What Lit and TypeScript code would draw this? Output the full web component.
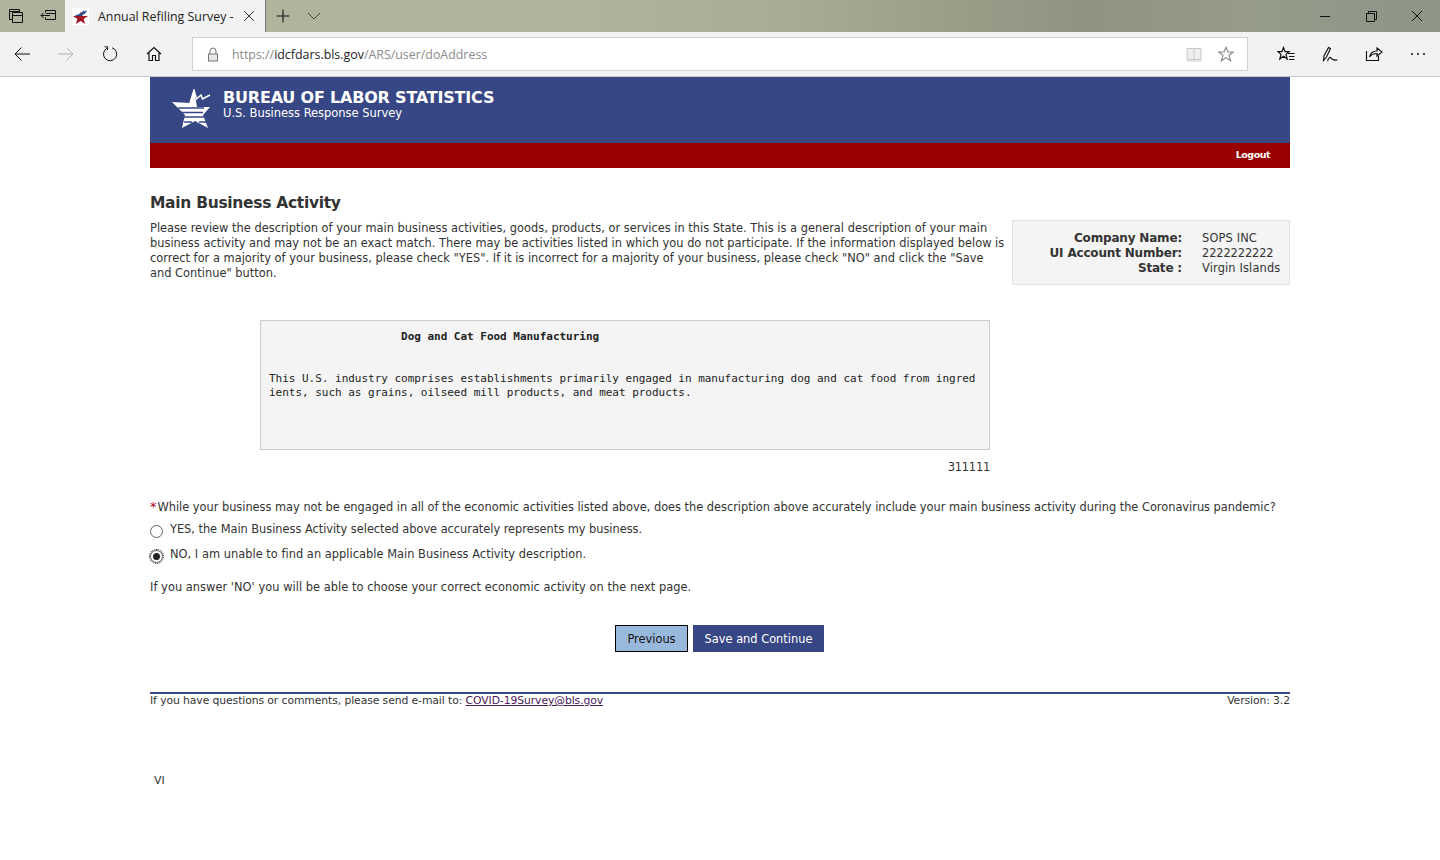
import { LitElement, html, css, svg } from "lit";
import { customElement } from "lit/decorators.js";

const ic = (w: number, h: number, body: unknown, cls = "") => html`<svg class=${cls} width=${w} height=${h} viewBox="0 0 ${w} ${h}" fill="none" stroke="currentColor" stroke-width="1">${body}</svg>`;

@customElement("app-root")
export class AppRoot extends LitElement {
  static styles = css`
    :host { display: block; width: 1440px; height: 860px; overflow: hidden; background: #fff; font-family: "DejaVu Sans", sans-serif; color: #333; font-size: 11.4px; }
    svg { display: block; flex: none; }
    .titlebar { height: 32px; display: flex; background: linear-gradient(90deg, #b0b49c 0%, #b0b49c 40%, #a8ac94 55%, #8f9380 75%, #969b8a 87%, #8f9585 100%); color: #111; }
    .tb-btn { width: 32px; display: flex; align-items: center; justify-content: center; }
    .tab { width: 201px; margin-left: 1px; background: #f2f2f2; display: flex; align-items: center; padding-left: 7px; box-sizing: border-box; border-right: 1px solid #777; font: 12.4px "Open Sans", sans-serif; color: #222; }
    .tab .name { margin-left: 9px; flex: 1; white-space: nowrap; }
    .tab .close { margin-right: 10px; color: #333; }
    .new { width: 34px; display: flex; justify-content: center; align-items: center; }
    .new.chev { width: 28px; color: #444; }
    .spacer { flex: 1; }
    .win { width: 46px; display: flex; align-items: center; justify-content: center; }
    .toolbar { height: 44px; background: #f2f2f2; border-bottom: 1px solid #c8c8c8; display: flex; align-items: center; color: #111; }
    .nav { width: 44px; display: flex; justify-content: center; align-items: center; }
    .nav.off { color: #b4b4b4; }
    .addr { margin-left: 16px; width: 1057px; height: 34px; box-sizing: border-box; background: #fff; border: 1px solid #d0d0d0; display: flex; align-items: center; padding-left: 14px; font: 12.4px "Open Sans", sans-serif; color: #8a8a8a; }
    .addr b { font-weight: 400; color: #222; }
    .addr .url { margin-left: 13px; flex: 1; white-space: nowrap; }
    .addr .book { margin-right: 16px; color: #c4c4c4; }
    .addr .star { margin-right: 13px; }
    .tools { margin-left: 16px; display: flex; }
    .tools div { width: 44px; display: flex; justify-content: center; align-items: center; }
    .wrap { width: 1140px; margin-left: 150px; }
    .banner { height: 66px; background: #374785; color: #fff; display: flex; padding-left: 22px; box-sizing: border-box; }
    .logo { margin-top: 12px; }
    .brand { margin-left: 11px; padding-top: 11px; }
    .brand h1 { margin: 0; font: 700 16px/20px "DejaVu Sans", sans-serif; letter-spacing: -0.2px; white-space: nowrap; }
    .brand p { margin: -2px 0 0; font: 11.5px/15px "DejaVu Sans", sans-serif; letter-spacing: -0.03px; }
    .redbar { height: 23px; padding: 0 20px 2px 0; background: #990000; display: flex; justify-content: flex-end; align-items: center; color: #fff; font-size: 9.5px; font-weight: 700; letter-spacing: -0.5px; }
    h2 { margin: 25px 0 0; font: 700 15.5px/20px "DejaVu Sans", sans-serif; letter-spacing: -0.3px; color: #333; }
    .intro { display: flex; margin-top: 8px; }
    .intro p { margin: 0; width: 862px; flex: none; line-height: 15px; letter-spacing: 0.013px; white-space: nowrap; }
    .company { margin: -1px 0 0 auto; width: 278px; height: 65px; box-sizing: border-box; background: #f4f4f4; border: 1px solid #e2e2e2; display: grid; grid-template-columns: 169px 1fr; column-gap: 20px; align-content: start; padding-top: 10px; line-height: 15px; letter-spacing: 0.15px; }
    .company .k { text-align: right; font-weight: 700; font-size: 12px; letter-spacing: -0.18px; }
    .company .num { letter-spacing: -0.1px; }
    .desc { margin: 35px 0 0 110px; width: 730px; height: 130px; box-sizing: border-box; background: #f4f4f4; border: 1px solid #ccc; padding: 9px 8px; font: 11px/14px "DejaVu Sans Mono", monospace; letter-spacing: -0.02px; color: #222; white-space: pre; }
    .code { width: 840px; text-align: right; margin-top: 10px; line-height: 15px; letter-spacing: -0.2px; }
    .q { margin-top: 24px; line-height: 15px; letter-spacing: -0.02px; white-space: nowrap; }
    .q i { color: #b00020; font-style: normal; font-size: 13px; margin-right: 1px; }
    .opt { display: flex; align-items: flex-start; line-height: 15px; white-space: nowrap; }
    .opt.a { margin-top: 7px; letter-spacing: -0.03px; }
    .opt.b { margin-top: 9px; letter-spacing: 0.03px; }
    .radio { width: 13px; height: 13px; box-sizing: border-box; border-radius: 50%; border: 1px solid #666; background: #fff; margin: 3px 7px 0 0; position: relative; flex: none; }
    .radio.on { outline: 1px dotted #222; outline-offset: 0; }
    .radio.on::after { content: ""; position: absolute; left: 2px; top: 2px; width: 7px; height: 7px; border-radius: 50%; background: #222; }
    .note { margin-top: 17px; line-height: 15px; letter-spacing: 0.04px; }
    .btns { margin-top: 30px; display: flex; justify-content: center; gap: 5px; padding-right: 1px; }
    button { font: 11.4px "DejaVu Sans", sans-serif; height: 27px; padding: 0; box-sizing: border-box; }
    .prev { width: 73px; background: #99b9dc; border: 1px solid #000; color: #111; }
    .save { width: 131px; background: #374785; border: 0; color: #fff; }
    .foot { margin-top: 40px; border-top: 2px solid #374785; display: flex; justify-content: space-between; line-height: 14px; font-size: 10.8px; letter-spacing: -0.09px; }
    .foot a { color: #4a1a5c; text-decoration: underline; }
    .vi { margin: 66px 0 0 4px; font-size: 11px; line-height: 14px; }
  `;

  render() {
    return html`
      <div class="titlebar">
        <div class="tb-btn">${ic(15, 15, svg`<path d="M3.5 10.5H.5V.5H10.5V3.5M.5 2.5H10.5"/><path d="M3.5 3.5H13.5V13.5H3.5ZM3.5 6.5H13.5"/>`)}</div>
        <div class="tb-btn">${ic(17, 12, svg`<path d="M5.5 2.5V.5H15.5V9.5H5.5V7.5M6 3.5H15.5M1 5.5H10M1 5.5L3.5 3M1 5.5L3.5 8"/>`)}</div>
        <div class="tab">
          <svg width="17" height="17" viewBox="0 0 17 17"><rect width="17" height="17" fill="#fff"/><path d="M8.5 4L10.5 8H16L11.6 11L13.2 16L8.5 13L3.8 16L5.4 11L1 8H6.5Z" fill="#a01622"/><path d="M3 7C6.5 7 10 5 12.5 1L11.5 3.6L15.5 2.4L13 5.6L9 8H4Z" fill="#2b4d8f"/></svg>
          <span class="name">Annual Refiling Survey -</span>
          ${ic(12, 12, svg`<path d="M1 1L11 11M11 1L1 11"/>`, "close")}
        </div>
        <div class="new">${ic(14, 14, svg`<path d="M7 .5V13.5M.5 7H13.5" stroke-width="1.1"/>`)}</div>
        <div class="new chev">${ic(14, 8, svg`<path d="M1 1L7 7L13 1"/>`)}</div>
        <div class="spacer"></div>
        <div class="win">${ic(10, 10, svg`<path d="M0 5.5H10"/>`)}</div>
        <div class="win">${ic(11, 11, svg`<path d="M.5 2.5H8.5V10.5H.5ZM2.5 2.5V.5H10.5V8.5H8.5"/>`)}</div>
        <div class="win">${ic(12, 12, svg`<path d="M1 1L11 11M11 1L1 11"/>`)}</div>
      </div>
      <div class="toolbar">
        <div class="nav">${ic(16, 14, svg`<path d="M16 7H1M7.5 .5L1 7L7.5 13.5"/>`)}</div>
        <div class="nav off">${ic(16, 14, svg`<path d="M0 7H15M8.5 .5L15 7L8.5 13.5"/>`)}</div>
        <div class="nav">${ic(16, 16, svg`<path d="M5.2 2.2A6.6 6.6 0 1 0 10 1.8"/><path d="M2.6 .8H5.6V4"/>`)}</div>
        <div class="nav">${ic(16, 16, svg`<path d="M1 8L8 1.5L15 8M3 6.5V14.5H6.5V9.5H9.5V14.5H13V6.5" stroke-width="1.15"/>`)}</div>
        <div class="addr">
          ${ic(12, 15, svg`<path d="M3 7V4A3 3 0 0 1 9 4V7" stroke="#777"/><rect x="1.5" y="7" width="9" height="7" stroke="#777" fill="#e8e8e8"/>`)}
          <span class="url">https://<b>idcfdars.bls.gov</b>/ARS/user/doAddress</span>
          ${ic(16, 15, svg`<path d="M1 1.5H7.5L8 2.5L8.5 1.5H15V12.5H1ZM8 2.5V12.5M.5 14H15.5" stroke="#c8c8c8" fill="#eee"/>`, "book")}
          ${ic(16, 16, svg`<path d="M8 1.2L10 6H15.3L11 9.3L12.6 14.8L8 11.6L3.4 14.8L5 9.3L.7 6H6Z" stroke-width="1.15"/>`, "star")}
        </div>
        <div class="tools">
          <div>${ic(18, 16, svg`<path d="M6.5 1.5L8 5.7H12L9 8.4L10.2 13L6.5 10.3L2.8 13L4 8.4L1 5.7H5Z" stroke-width="1.2"/><path d="M11 7.5H17.5M12 10.5H17.5M12 13.5H17.5" stroke-width="1.1"/>`)}</div>
          <div>${ic(16, 16, svg`<path d="M1.5 14.5L2 10L6.5 1.5L8.5 2.5L4.5 11L1.5 14.5ZM5.5 15C7 11.5 8 10.5 9 12C10 14 11.5 14.5 15.5 14" stroke-width="1.15"/>`)}</div>
          <div>${ic(18, 16, svg`<path d="M1.5 5V14.5H13.5V10M4.5 11C5.5 7 8.5 5 12 5V2L17 6L12 10V7.5C9 7.5 6.5 8.5 4.5 11Z" stroke-width="1.15"/>`)}</div>
          <div>${ic(16, 4, svg`<circle cx="2" cy="2" r="1" fill="currentColor" stroke="none"/><circle cx="8" cy="2" r="1" fill="currentColor" stroke="none"/><circle cx="14" cy="2" r="1" fill="currentColor" stroke="none"/>`)}</div>
        </div>
      </div>
      <div class="wrap">
        <div class="banner">
          <svg class="logo" width="40" height="40" viewBox="0 0 40 40">
            <path d="M0 13L18 14L22 1L24 12L25 18H38L31 26L36 39L23 32L10 39L13 26Z" fill="#fff"/>
            <path d="M6 19H32M9 23.5H31M11 28H32M12 33H20M27 33H34" stroke="#374785" stroke-width="1.6" fill="none"/>
            <path d="M18 14L22 1L24.5 10L29 6L30.5 10L38 6" stroke="#fff" stroke-width="1.5" fill="none"/>
          </svg>
          <div class="brand">
            <h1>BUREAU OF LABOR STATISTICS</h1>
            <p>U.S. Business Response Survey</p>
          </div>
        </div>
        <div class="redbar">Logout</div>
        <h2>Main Business Activity</h2>
        <div class="intro">
          <p>Please review the description of your main business activities, goods, products, or services in this State. This is a general description of your main<br>business activity and may not be an exact match. There may be activities listed in which you do not participate. If the information displayed below is<br>correct for a majority of your business, please check "YES". If it is incorrect for a majority of your business, please check "NO" and click the "Save<br>and Continue" button.</p>
          <div class="company">
            <span class="k">Company Name:</span><span>SOPS INC</span>
            <span class="k">UI Account Number:</span><span class="num">2222222222</span>
            <span class="k">State :</span><span>Virgin Islands</span>
          </div>
        </div>
        <div class="desc"><b>                    Dog and Cat Food Manufacturing</b>


This U.S. industry comprises establishments primarily engaged in manufacturing dog and cat food from ingred
ients, such as grains, oilseed mill products, and meat products.</div>
        <div class="code">311111</div>
        <div class="q"><i>*</i>While your business may not be engaged in all of the economic activities listed above, does the description above accurately include your main business activity during the Coronavirus pandemic?</div>
        <div class="opt a"><span class="radio"></span>YES, the Main Business Activity selected above accurately represents my business.</div>
        <div class="opt b"><span class="radio on"></span>NO, I am unable to find an applicable Main Business Activity description.</div>
        <div class="note">If you answer 'NO' you will be able to choose your correct economic activity on the next page.</div>
        <div class="btns"><button class="prev">Previous</button><button class="save">Save and Continue</button></div>
        <div class="foot"><span>If you have questions or comments, please send e-mail to: <a href="#">COVID-19Survey@bls.gov</a></span><span>Version: 3.2</span></div>
        <div class="vi">VI</div>
      </div>
    `;
  }
}
